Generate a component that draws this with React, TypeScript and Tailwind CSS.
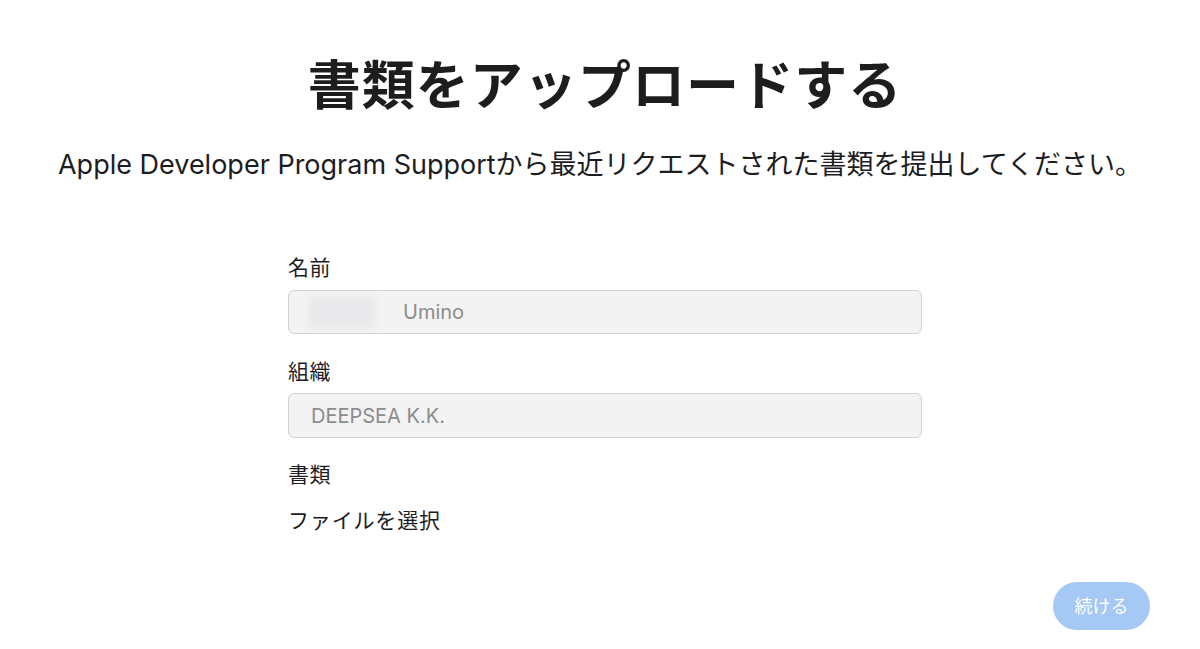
const font = {
  fontFamily: '"Inter", "Noto Sans CJK JP", sans-serif',
};

const Field = ({ label, children }: { label: string; children: React.ReactNode }) => (
  <div className="flex flex-col">
    <label className="text-[21px] leading-[28px] tracking-[0.02em] text-[#1d1d1f]">{label}</label>
    {children}
  </div>
);

const App = () => {
  return (
    <div className="min-h-[649px] w-[1200px] bg-white text-[#1d1d1f]" style={font}>
      <div className="flex flex-col items-center pt-[58px]">
        <h1 className="pl-[10px] text-[53px] font-bold leading-[57px] tracking-[0.02em]">
          書類をアップロードする
        </h1>
        <p className="mt-[33px] text-[27px] leading-[34px]">
          Apple Developer Program Supportから最近リクエストされた書類を提出してください。
        </p>
      </div>

      <div className="ml-[288px] mt-[72px] w-[634px]">
        <Field label="名前">
          <div className="relative mt-[8px] flex h-[44px] items-center rounded-[6px] border border-[#d2d2d6] bg-[#f3f3f4] px-[22px] text-[20px] text-[#8c8c8e]">
            <div className="absolute left-[20px] top-[6px] h-[32px] w-[66px] bg-[#e9e9eb] blur-[3px]" />
            <span className="ml-[92px]">Umino</span>
          </div>
        </Field>
        <div className="mt-[24px]">
          <Field label="組織">
            <div className="mt-[7px] flex h-[45px] items-center rounded-[6px] border border-[#d2d2d6] bg-[#f3f3f4] px-[22px] text-[20px] text-[#8c8c8e]">
              DEEPSEA K.K.
            </div>
          </Field>
        </div>
        <div className="mt-[23px]">
          <Field label="書類">
            <span className="mt-[18px] text-[21px] leading-[28px] tracking-[0.04em]">ファイルを選択</span>
          </Field>
        </div>
      </div>

      <div className="mt-[47px] flex justify-end pr-[50px]">
        <button className="flex h-[48px] w-[97px] items-center justify-center rounded-full bg-[#a6c8f4] text-[18px] text-white">
          続ける
        </button>
      </div>
    </div>
  );
};

export default App;
